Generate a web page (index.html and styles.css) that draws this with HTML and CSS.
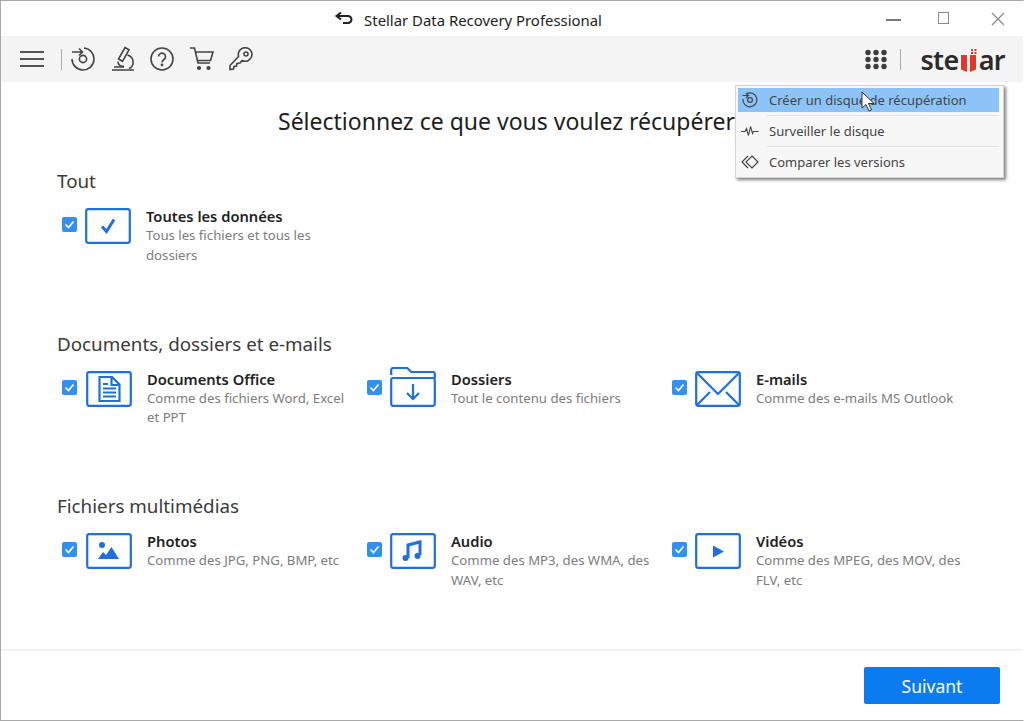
FILE: index.html
```html
<!DOCTYPE html>
<html lang="fr">
<head>
    <title>Stellar Data Recovery Professional</title>
    <link rel="stylesheet" href="styles.css">
</head>
<body>
<div class="window">
    <header class="titlebar">
        <div class="title">
            <svg class="title-icon" width="20" height="14" viewBox="0 0 20 14"><path d="M7 1.500 2.500 5 7 8.500M3 5h11a3.400 3.400 0 0 1 0 7H9" fill="none" stroke="#222" stroke-width="2"/></svg>
            <span>Stellar Data Recovery Professional</span>
        </div>
        <div class="win-controls">
            <span class="win-min"></span>
            <span class="win-max"></span>
            <svg width="14" height="14" viewBox="0 0 14 14"><path d="M1 1l12 12M13 1 1 13" stroke="#8a8a8a" stroke-width="1.2"/></svg>
        </div>
    </header>

    <nav class="toolbar">
        <div class="tools">
            <svg class="tool-menu" width="24" height="18" viewBox="0 0 24 18"><path d="M0 2h24M0 9h24M0 16h24" stroke="#555" stroke-width="2.2"/></svg>
            <span class="tool-sep"></span>
            <svg width="24" height="24" viewBox="0 0 24 24" fill="none" stroke="#444" stroke-width="1.6"><path d="M13 1A11 11 0 1 1 1 12"/><circle cx="12" cy="12" r="3.600"/><path d="M1 5h10M8 1.500 11.500 5 8 8.500"/></svg>
            <svg width="24" height="26" viewBox="0 0 24 26" fill="none" stroke="#444" stroke-width="1.6"><path d="M14 1.500l4 2.300-6.500 11.500-4-2.300zM1 24h22M3 21h10M16.500 9a7.500 7.500 0 0 1 3.500 12.500l-2 1"/><path d="M7 15.500a4.500 4.500 0 0 0 6 4.500"/></svg>
            <svg width="24" height="24" viewBox="0 0 24 24" fill="none" stroke="#444" stroke-width="1.6"><circle cx="12" cy="12" r="11"/><path d="M8.500 9.500a3.500 3.500 0 1 1 5.500 3c-1.300.9-2 1.500-2 3"/><circle cx="12" cy="18" r=".6"/></svg>
            <svg width="24" height="24" viewBox="0 0 24 24" fill="none" stroke="#444" stroke-width="1.6"><path d="M0 1h4.500l3.500 15h12M5.500 5H23l-2.500 8.500H7.500"/><circle cx="9" cy="21" r="1.300" fill="#444"/><circle cx="18.500" cy="21" r="1.300" fill="#444"/></svg>
            <svg width="24" height="24" viewBox="0 0 24 24" fill="none" stroke="#444" stroke-width="1.6"><path d="M9.500 9.500 1 18.500v4l3.500-.5.500-2.500 2.500-.5.500-2.500 3-.5 2-2.500a6.800 6.800 0 1 0-3.500-4.500z"/><circle cx="17" cy="7" r="2"/></svg>
        </div>
        <div class="brand">
            <svg class="apps" width="24" height="21" viewBox="0 0 24 21" fill="#3c3c3c"><circle cx="4" cy="3.500" r="2.700"/><circle cx="12" cy="3.500" r="2.700"/><circle cx="20" cy="3.500" r="2.700"/><circle cx="4" cy="10.500" r="2.700"/><circle cx="12" cy="10.500" r="2.700"/><circle cx="20" cy="10.500" r="2.700"/><circle cx="4" cy="17.500" r="2.700"/><circle cx="12" cy="17.500" r="2.700"/><circle cx="20" cy="17.500" r="2.700"/></svg>
            <span class="tool-sep"></span>
            <div class="logo">ste<svg class="logo-mark" width="20" height="25" viewBox="0 0 20 25"><path d="M2 7h6v17l-6-2.500zM11 7h6v14.500L11 24z" fill="#e2372b"/><path d="M12 1h2v2h-2zM15.500 1h2v2h-2zM15.500 4h2v2h-2zM12 4h2v2h-2z" fill="#e2372b"/></svg>ar</div>
        </div>
    </nav>

    <main class="content">
        <h1>Sélectionnez ce que vous voulez récupérer</h1>

        <section class="group group-all">
            <h2>Tout</h2>
            <div class="options">
                <div class="option">
                    <span class="check"><svg width="15" height="15" viewBox="0 0 15 15"><path d="M3.500 7.500 6.500 10.500 11.500 4.500" fill="none" stroke="#fff" stroke-width="1.600"/></svg></span>
                    <svg class="type-icon" viewBox="0 0 46 36"><rect x="1.200" y="1.200" width="43.600" height="33.600" rx="2" class="ln"/><path d="M17 18.500l4.500 5L29 11.500" class="ln thick"/></svg>
                    <div class="option-text"><h3>Toutes les données</h3><p>Tous les fichiers et tous les dossiers</p></div>
                </div>
            </div>
        </section>

        <section class="group group-docs">
            <h2>Documents, dossiers et e-mails</h2>
            <div class="options">
                <div class="option">
                    <span class="check"><svg width="15" height="15" viewBox="0 0 15 15"><path d="M3.500 7.500 6.500 10.500 11.500 4.500" fill="none" stroke="#fff" stroke-width="1.600"/></svg></span>
                    <svg class="type-icon" viewBox="0 0 46 36"><rect x="1.200" y="1.200" width="43.600" height="33.600" rx="2" class="ln"/><path d="M13.500 6h12.500l7.500 7.500V30h-20zM25.500 6v8h8M17 13h5M17 17.500h13M17 21.500h13M17 25.500h13" class="ln"/></svg>
                    <div class="option-text"><h3>Documents Office</h3><p>Comme des fichiers Word, Excel et PPT</p></div>
                </div>
                <div class="option">
                    <span class="check"><svg width="15" height="15" viewBox="0 0 15 15"><path d="M3.500 7.500 6.500 10.500 11.500 4.500" fill="none" stroke="#fff" stroke-width="1.600"/></svg></span>
                    <svg class="type-icon folder" viewBox="0 0 46 40"><path d="M1.200 8V3q0-2 2-2h14l4 4h21.600q2 0 2 2v4" class="ln"/><rect x="1.200" y="11" width="43.600" height="27.800" rx="2" class="ln"/><path d="M23 17v15M17 26l6 6 6-6" class="ln"/></svg>
                    <div class="option-text"><h3>Dossiers</h3><p>Tout le contenu des fichiers</p></div>
                </div>
                <div class="option">
                    <span class="check"><svg width="15" height="15" viewBox="0 0 15 15"><path d="M3.500 7.500 6.500 10.500 11.500 4.500" fill="none" stroke="#fff" stroke-width="1.600"/></svg></span>
                    <svg class="type-icon" viewBox="0 0 46 36"><rect x="1.200" y="1.200" width="43.600" height="33.600" rx="2" class="ln"/><path d="M2 2l21 21L44 2M2 34l13-13M44 34 31 21" class="ln"/></svg>
                    <div class="option-text"><h3>E-mails</h3><p>Comme des e-mails MS Outlook</p></div>
                </div>
            </div>
        </section>

        <section class="group group-media">
            <h2>Fichiers multimédias</h2>
            <div class="options">
                <div class="option">
                    <span class="check"><svg width="15" height="15" viewBox="0 0 15 15"><path d="M3.500 7.500 6.500 10.500 11.500 4.500" fill="none" stroke="#fff" stroke-width="1.600"/></svg></span>
                    <svg class="type-icon" viewBox="0 0 46 36"><rect x="1.200" y="1.200" width="43.600" height="33.600" rx="2" class="ln"/><circle cx="16" cy="12" r="3" class="fl"/><path d="M12 26l5-7 3 3 5.500-8L33 26z" class="fl"/></svg>
                    <div class="option-text"><h3>Photos</h3><p>Comme des JPG, PNG, BMP, etc</p></div>
                </div>
                <div class="option">
                    <span class="check"><svg width="15" height="15" viewBox="0 0 15 15"><path d="M3.500 7.500 6.500 10.500 11.500 4.500" fill="none" stroke="#fff" stroke-width="1.600"/></svg></span>
                    <svg class="type-icon" viewBox="0 0 46 36"><rect x="1.200" y="1.200" width="43.600" height="33.600" rx="2" class="ln"/><path d="M18 25V12l12-3v13" class="ln thick"/><circle cx="15.500" cy="25" r="3" class="fl"/><circle cx="27.500" cy="23" r="3" class="fl"/></svg>
                    <div class="option-text"><h3>Audio</h3><p>Comme des MP3, des WMA, des WAV, etc</p></div>
                </div>
                <div class="option">
                    <span class="check"><svg width="15" height="15" viewBox="0 0 15 15"><path d="M3.500 7.500 6.500 10.500 11.500 4.500" fill="none" stroke="#fff" stroke-width="1.600"/></svg></span>
                    <svg class="type-icon" viewBox="0 0 46 36"><rect x="1.200" y="1.200" width="43.600" height="33.600" rx="2" class="ln"/><path d="M18 12.500l11 6-11 6z" class="fl"/></svg>
                    <div class="option-text"><h3>Vidéos</h3><p>Comme des MPEG, des MOV, des FLV, etc</p></div>
                </div>
            </div>
        </section>
    </main>

    <footer class="footer">
        <button type="button" class="next-button">Suivant</button>
    </footer>

    <ul class="menu">
        <li class="menu-item active">
            <svg width="18" height="18" viewBox="0 0 18 18" fill="none" stroke="#444" stroke-width="1.200"><path d="M6 2.500A7 7 0 1 1 2 8"/><circle cx="9" cy="9" r="2.400"/><path d="M1.500 4.500h6M5 2l2.500 2.500L5 7"/></svg>
            <span>Créer un disque de récupération</span>
        </li>
        <li class="menu-item">
            <svg width="18" height="18" viewBox="0 0 18 18" fill="none" stroke="#444" stroke-width="1.100"><path d="M0 9.500h4l1.500-3 2 7 2-9 2 7 1-2h5"/></svg>
            <span>Surveiller le disque</span>
        </li>
        <li class="menu-item">
            <svg width="18" height="18" viewBox="0 0 18 18" fill="none" stroke="#444" stroke-width="1.200"><path d="M7 3 1 9l6 6M11 3l6 6-6 6-6-6z"/></svg>
            <span>Comparer les versions</span>
        </li>
    </ul>
    <svg class="cursor" width="14" height="22" viewBox="0 0 14 22"><path d="M1 1v16l4-3.500 3 6.500 2.500-1-3-6.500H13z" fill="#fff" stroke="#333" stroke-width="1"/></svg>
</div>
</body>
</html>
```

FILE: styles.css
```css
* {
    box-sizing: border-box;
}
html, body {
    margin: 0;
    height: 100%;
}
body {
    font-family: "Noto Sans", "Open Sans", sans-serif;
    background-color: #fff;
    color: #222;
}
.window {
    position: relative;
    width: 1024px;
    height: 721px;
    border: 1px solid #a8a8a8;
    border-right-color: #fff;
    display: flex;
    flex-direction: column;
    overflow: hidden;
}

/* title bar */
.titlebar {
    height: 35px;
    flex: none;
    position: relative;
    display: flex;
    align-items: center;
    justify-content: center;
    padding-top: 2px;
}
.title {
    display: flex;
    align-items: center;
    gap: 10px;
    font-size: 14.9px;
    color: #1c1c1c;
    margin-left: -88px;
}
.title-icon {
    margin-top: -3px;
}
.win-controls {
    position: absolute;
    right: 18px;
    top: 11px;
    display: flex;
    align-items: center;
}
.win-min {
    width: 15px;
    height: 2px;
    margin-top: 2px;
    margin-right: 37px;
    background-color: #777;
}
.win-max {
    width: 11px;
    height: 12px;
    border: 1px solid #8a8a8a;
    margin-top: -3px;
    margin-right: 42px;
}

/* toolbar */
.toolbar {
    height: 46px;
    flex: none;
    background-color: #f4f4f4;
    display: flex;
    align-items: center;
    justify-content: space-between;
    padding: 0 18px 0 19px;
}
.tools {
    display: flex;
    align-items: center;
    gap: 15.5px;
}
.tool-menu {
    margin-right: 1px;
}
.tool-sep {
    width: 1px;
    height: 21px;
    background-color: #aaa;
    margin-right: -6px;
}
.brand {
    display: flex;
    align-items: center;
    gap: 12px;
}
.brand .tool-sep {
    margin-right: -3px;
}
.logo {
    display: flex;
    align-items: flex-end;
    margin-left: 10px;
    font-size: 27px;
    font-weight: 600;
    line-height: 27px;
    letter-spacing: -0.6px;
    color: #2b2b2b;
}

/* main area */
.content {
    flex: 1;
    min-height: 0;
    padding: 0 0 0 56px;
}
h1 {
    font-size: 23px;
    font-weight: 400;
    color: #1e1e1e;
    margin: 22px 0 0 221px;
    line-height: 34px;
    white-space: nowrap;
}
h2 {
    font-size: 18.8px;
    font-weight: 400;
    color: #3a3a3a;
    margin: 0;
    line-height: 26px;
}
.group {
    height: 162.5px;
}
.group-all {
    margin-top: 30px;
}
.options {
    display: grid;
    grid-template-columns: repeat(3, 305px);
    margin-top: 14px;
    padding-left: 5px;
}
.option {
    display: flex;
    align-items: flex-start;
}
.check {
    width: 15px;
    height: 15px;
    margin-top: 9px;
    flex: none;
    border-radius: 2px;
    background-color: #3490f0;
    display: flex;
}
.type-icon {
    width: 46px;
    height: 36px;
    margin-left: 8px;
    flex: none;
}
.group-docs .option:first-child .type-icon,
.group-media .option:first-child .type-icon {
    margin-left: 9px;
}
.type-icon.folder {
    height: 40px;
    margin-top: -4px;
}
.ln {
    fill: none;
    stroke: #1f6fdc;
    stroke-width: 2.2;
}
.ln.thick {
    stroke-width: 3;
}
.fl {
    fill: #1f6fdc;
}
.option-text {
    margin-left: 15px;
    width: 210px;
}
h3 {
    font-size: 14.7px;
    font-weight: 600;
    color: #222;
    margin: -1px 0 1px;
    line-height: 18px;
}
.option-text p {
    font-size: 13.2px;
    color: #7c7c7c;
    margin: 0;
    line-height: 19.5px;
}

/* footer */
.footer {
    height: 71px;
    flex: none;
    border-top: 2px solid #f2f2f2;
    display: flex;
    justify-content: flex-end;
    align-items: flex-start;
    padding: 16px 23px 0 0;
}
.next-button {
    width: 136px;
    height: 37px;
    border: none;
    border-radius: 2px;
    background-color: #0a7cf0;
    color: #fff;
    font-family: inherit;
    font-size: 17.5px;
    cursor: pointer;
}

/* popup menu */
.menu {
    position: absolute;
    left: 734px;
    top: 84px;
    width: 269px;
    height: 93px;
    margin: 0;
    padding: 2px 4px 0 2px;
    list-style: none;
    background-color: #f7f7f7;
    border: 1px solid #d4d4d4;
    box-shadow: 2px 2px 3px rgba(0, 0, 0, 0.5);
}
.menu-item {
    height: 31px;
    display: flex;
    align-items: center;
    gap: 10px;
    padding: 0 0 0 3px;
    font-size: 13px;
    color: #444;
    position: relative;
}
.menu-item + .menu-item::before {
    content: "";
    position: absolute;
    left: 29px;
    right: 0;
    top: 0;
    border-top: 1px solid #e2e2e2;
}
.menu-item.active {
    height: 24px;
    margin-bottom: 3px;
    background-color: #8cc4f8;
}
.cursor {
    position: absolute;
    left: 860px;
    top: 90px;
}
```
